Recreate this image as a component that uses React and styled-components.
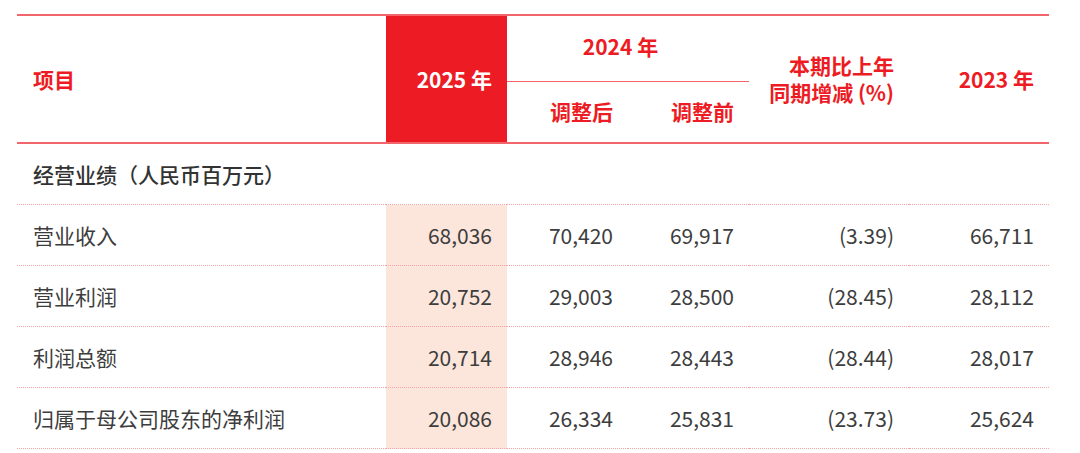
import React from "react";
import styled, { createGlobalStyle } from "styled-components";

const RED = "#ED1C24";
const LINE = "#F2666B";
const DOT = "#F5A3A6";
const PEACH = "#FCE5DB";

const GlobalStyle = createGlobalStyle`
  html, body {
    margin: 0;
    padding: 0;
    background: #fff;
  }
  body {
    font-family: "Noto Sans CJK SC", "Noto Sans", sans-serif;
    color: #3d3d3d;
  }
`;

const Page = styled.div`
  padding: 14px 0 0 17px;
`;

const Table = styled.table`
  width: 1032px;
  border-collapse: collapse;
  table-layout: fixed;
  border-top: 2px solid ${LINE};
`;

const HeadCell = styled.th`
  color: ${(p) => (p.$hl ? "#fff" : RED)};
  background: ${(p) => (p.$hl ? RED : "transparent")};
  font-size: 21px;
  font-weight: 700;
  line-height: 27px;
  text-align: ${(p) => p.$align || "right"};
  padding: 0 15px 0 ${(p) => (p.$align === "left" ? "16px" : "0")};
  height: ${(p) => p.$h || 62}px;
  border-bottom: 2px solid ${LINE};
  vertical-align: middle;
  box-sizing: border-box;
  white-space: nowrap;
`;

const SubHead = styled(HeadCell)`
  padding-bottom: ${(p) => p.$pb || 0}px;
  border-bottom: ${(p) => (p.$thin ? `1px solid ${LINE}` : `2px solid ${LINE}`)};
`;

const SectionCell = styled.td`
  font-size: 21px;
  font-weight: 500;
  color: #333;
  height: 60px;
  padding: 0 0 0 16px;
  border-bottom: 1px dotted ${DOT};
`;

const Cell = styled.td`
  font-size: 21px;
  font-weight: 400;
  height: 60px;
  text-align: ${(p) => (p.$left ? "left" : "right")};
  padding: ${(p) => (p.$left ? "0 0 0 16px" : "0 15px 0 0")};
  background: ${(p) => (p.$hl ? PEACH : "transparent")};
  border-bottom: 1px dotted ${DOT};
  white-space: nowrap;
`;

const rows = [
  ["营业收入", "68,036", "70,420", "69,917", "(3.39)", "66,711"],
  ["营业利润", "20,752", "29,003", "28,500", "(28.45)", "28,112"],
  ["利润总额", "20,714", "28,946", "28,443", "(28.44)", "28,017"],
  ["归属于母公司股东的净利润", "20,086", "26,334", "25,831", "(23.73)", "25,624"],
];

export default function App() {
  return (
    <Page>
      <GlobalStyle />
      <Table>
        <colgroup>
          <col style={{ width: 369 }} />
          <col style={{ width: 121 }} />
          <col style={{ width: 121 }} />
          <col style={{ width: 121 }} />
          <col style={{ width: 160 }} />
          <col style={{ width: 140 }} />
        </colgroup>
        <thead>
          <tr>
            <HeadCell rowSpan={2} $align="left">项目</HeadCell>
            <HeadCell rowSpan={2} $hl>2025 年</HeadCell>
            <SubHead colSpan={2} $align="center" $h={66} $thin $pb={4}>
              2024 年
            </SubHead>
            <HeadCell rowSpan={2}>
              本期比上年
              <br />
              同期增减 (%)
            </HeadCell>
            <HeadCell rowSpan={2}>2023 年</HeadCell>
          </tr>
          <tr>
            <SubHead $h={62} $pb={0}>调整后</SubHead>
            <SubHead $h={62} $pb={0}>调整前</SubHead>
          </tr>
        </thead>
        <tbody>
          <tr>
            <SectionCell colSpan={6}>经营业绩（人民币百万元）</SectionCell>
          </tr>
          {rows.map((r) => (
            <tr key={r[0]}>
              <Cell $left>{r[0]}</Cell>
              <Cell $hl>{r[1]}</Cell>
              <Cell>{r[2]}</Cell>
              <Cell>{r[3]}</Cell>
              <Cell>{r[4]}</Cell>
              <Cell>{r[5]}</Cell>
            </tr>
          ))}
        </tbody>
      </Table>
    </Page>
  );
}
